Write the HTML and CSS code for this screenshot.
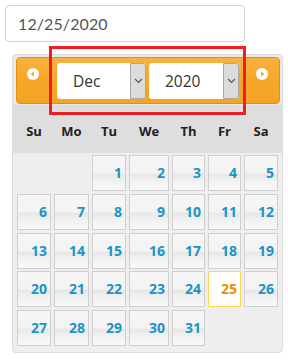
FILE: index.html
```html
<!DOCTYPE html>
<html>
<head>
<meta charset="utf-8">
<link rel="stylesheet" href="styles.css">
</head>
<body>
<div class="date-input">12/25/2020</div>
<div class="picker">
  <div class="picker-top">
    <div class="picker-header">
      <span class="nav nav-prev"><svg width="12" height="12" viewBox="0 0 12 12"><circle cx="6" cy="6" r="6" fill="#fff"/><polygon points="3.6,6 7,3.2 7,8.8" fill="#f6a828"/></svg></span>
      <div class="select sel-month"><span class="sel-text">Dec</span><span class="sel-btn"><svg width="9" height="6" viewBox="0 0 9 6"><polyline points="1,1 4.5,4.5 8,1" fill="none" stroke="#555" stroke-width="1.1"/></svg></span></div>
      <div class="select sel-year"><span class="sel-text">2020</span><span class="sel-btn"><svg width="9" height="6" viewBox="0 0 9 6"><polyline points="1,1 4.5,4.5 8,1" fill="none" stroke="#555" stroke-width="1.1"/></svg></span></div>
      <span class="nav nav-next"><svg width="12" height="12" viewBox="0 0 12 12"><circle cx="6" cy="6" r="6" fill="#fff"/><polygon points="8.4,6 5,3.2 5,8.8" fill="#f6a828"/></svg></span>
    </div>
    <div class="weekdays grid">
      <span>Su</span><span>Mo</span><span>Tu</span><span>We</span><span>Th</span><span>Fr</span><span>Sa</span>
    </div>
  </div>
  <div class="days grid">
    <span class="empty"></span><span class="empty"></span>
    <a class="day">1</a><a class="day">2</a><a class="day">3</a><a class="day">4</a><a class="day">5</a>
    <a class="day">6</a><a class="day">7</a><a class="day">8</a><a class="day">9</a><a class="day">10</a><a class="day">11</a><a class="day">12</a>
    <a class="day">13</a><a class="day">14</a><a class="day">15</a><a class="day">16</a><a class="day">17</a><a class="day">18</a><a class="day">19</a>
    <a class="day">20</a><a class="day">21</a><a class="day">22</a><a class="day">23</a><a class="day">24</a><a class="day active">25</a><a class="day">26</a>
    <a class="day">27</a><a class="day">28</a><a class="day">29</a><a class="day">30</a><a class="day">31</a>
  </div>
</div>
<div class="highlight-box"></div>
</body>
</html>
```
FILE: styles.css
```css
html, body {
  margin: 0;
  padding: 0;
  background: #fff;
}
body {
  padding: 5px;
  position: relative;
  width: 288px;
  height: 362px;
  box-sizing: border-box;
  font-family: "Open Sans", "Liberation Sans", sans-serif;
}
.date-input {
  width: 240px;
  height: 37px;
  box-sizing: border-box;
  border: 1px solid #d2d2d2;
  border-radius: 4px;
  padding-left: 12px;
  font-family: Lato, "Open Sans", sans-serif;
  font-size: 16px;
  line-height: 35px;
  color: #555;
  letter-spacing: 0.1px;
}
.picker {
  margin-top: 12px;
  margin-left: 7px;
  width: 271px;
  height: 299px;
  box-sizing: border-box;
  border: 1px solid #dcdcdc;
  border-radius: 4px;
  background: #eeeeee;
  overflow: hidden;
}
.picker-top {
  padding: 2px 2px 0 3px;
  background: linear-gradient(#e9e9e9 0, #e9e9e9 50px, #dedede 50px);
}
.picker-header {
  display: flex;
  align-items: center;
  height: 47px;
  box-sizing: border-box;
  border: 1px solid #e78f08;
  border-radius: 4px;
  background: linear-gradient(#f8b242, #f6a828 45%, #f5a424);
  padding-left: 10px;
}
.nav {
  display: block;
  width: 12px;
  height: 12px;
  align-self: flex-start;
  margin-top: 10px;
}
.nav svg { display: block; }
.nav-prev { margin-right: 18px; }
.nav-next { margin-left: 17px; }
.select {
  display: flex;
  height: 36px;
  background: #fff;
  border-radius: 3px;
  margin-top: 1px;
  box-sizing: border-box;
}
.sel-month { width: 89px; }
.sel-year { width: 90px; margin-left: 3px; }
.sel-text {
  flex: 1;
  padding-left: 16px;
  font-family: "Open Sans", sans-serif;
  font-size: 15.5px;
  line-height: 36px;
  color: #333;
}
.sel-btn {
  width: 16px;
  box-sizing: border-box;
  background: #dcdcdc;
  border: 1px solid #a8a8a8;
  border-radius: 0 3px 3px 0;
  display: flex;
  align-items: center;
  justify-content: center;
}
.sel-btn svg { display: block; }
.grid {
  display: grid;
  grid-template-columns: 34px 35px 34px 40px 33px 33px 34px;
  column-gap: 3px;
}
.weekdays {
  height: 49px;
  margin-left: 1px;
  align-items: center;
}
.weekdays span {
  text-align: center;
  font-weight: 700;
  font-size: 13px;
  color: #222;
  padding-top: 4px;
}
.days {
  padding: 2px 0 0 4px;
  grid-auto-rows: 36px;
  row-gap: 2.75px;
}
.day {
  display: block;
  box-sizing: border-box;
  border: 1px solid #cfcfcf;
  background: linear-gradient(#f6f6f6 0%, #f3f3f3 50%, #e7e7e7 54%, #f1f1f1 72%, #f8f8f8 100%);
  color: #1c94c4;
  font-weight: 700;
  font-size: 14px;
  text-align: right;
  padding-right: 3px;
  line-height: 34px;
}
.day.active {
  background: #fff;
  border-color: #fbd850;
  color: #eb8f00;
}
.highlight-box {
  position: absolute;
  left: 49px;
  top: 46px;
  width: 197px;
  height: 69px;
  box-sizing: border-box;
  border: 3px solid #f01c24;
}
```
